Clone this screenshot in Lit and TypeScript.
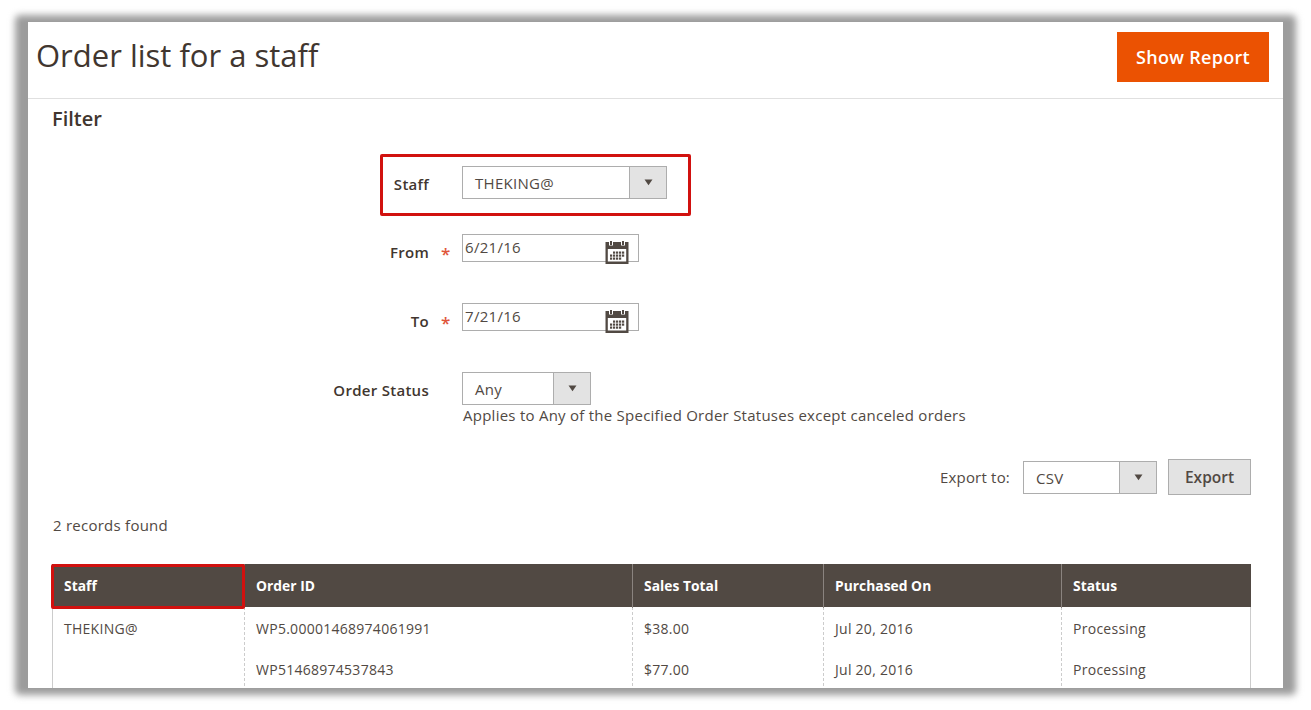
import { LitElement, html, svg, css } from "lit";
import { customElement, property } from "lit/decorators.js";

@customElement("drop-select")
class DropSelect extends LitElement {
  @property() value = "";
  static styles = css`
    :host { display: flex; box-sizing: border-box; height: 33px; border: 1px solid #adadad; background: #fff; }
    .value { flex: 1; padding-left: 12px; line-height: 32px; font-size: 15px; letter-spacing: 0.3px; color: #514943; }
    .arrow { width: 37px; box-sizing: border-box; border-left: 1px solid #adadad; background: #e3e3e3; display: flex; justify-content: center; padding-top: 12px; }
    svg { display: block; width: 9px; height: 7px; }
  `;
  render() {
    return html`<div class="value">${this.value}</div>
      <div class="arrow"><svg viewBox="0 0 9 7"><path d="M0.5 0.5h8L4.5 6.3z" fill="#514943" /></svg></div>`;
  }
}

@customElement("date-field")
class DateField extends LitElement {
  @property() value = "";
  static styles = css`
    :host { display: flex; justify-content: space-between; box-sizing: border-box; width: 177px; height: 28px; border: 1px solid #adadad; padding: 0 9px 0 2px; }
    .value { line-height: 25px; font-size: 15px; letter-spacing: 0.3px; color: #514943; }
    svg { display: block; width: 24px; height: 24px; margin-top: 5px; }
  `;
  render() {
    const dots = [
      [3, 0], [6, 0], [9, 0], [12, 0],
      [0, 3], [3, 3], [6, 3], [9, 3], [12, 3],
      [0, 6], [3, 6], [6, 6], [9, 6],
    ];
    return html`<div class="value">${this.value}</div>
      <svg viewBox="0 0 24 24">
        <path d="M0.5 2H23.5V24H0.5z" fill="#514943" />
        <path d="M2.8 9H21.2V21.5H2.8z" fill="#fff" />
        <path d="M4 0.5H8V5.5H4zM16 0.5H20V5.5H16z" fill="#fff" />
        <path d="M5 1H7V5H5zM17 1H19V5H17z" fill="#514943" />
        ${dots.map(([x, y]) => svg`<rect x=${5 + x} y=${11.5 + y} width="2.2" height="2.2" fill="#514943" />`)}
      </svg>`;
  }
}

@customElement("app-root")
class AppRoot extends LitElement {
  static styles = css`
    :host { display: block; box-sizing: border-box; height: 710px; overflow: hidden; background: #fff; padding: 22px 28px; font-family: "Open Sans", "Noto Sans", sans-serif; color: #514943; }
    * { box-sizing: border-box; }
    .frame { position: relative; z-index: 0; height: 666px; width: 1255px; }
    .shade { position: absolute; z-index: -1; inset: -7px -13px; border-radius: 5px; background: #9c9c9c; filter: blur(3.5px); }
    .page { height: 666px; overflow: hidden; background: #fff; }
    .top { height: 77px; border-bottom: 1px solid #e0e0e0; display: flex; justify-content: space-between; padding: 10px 14px 0 8px; color: #41362f; }
    h1 { margin: 0; font-weight: 400; font-size: 31px; line-height: 47px; white-space: nowrap; }
    .primary { height: 50px; width: 152px; background: #eb5202; color: #fff; font-weight: 600; font-size: 18px; letter-spacing: 0.3px; line-height: 50px; text-align: center; }
    .content { padding: 0 32px 0 24px; }
    h2 { margin: 0; font-weight: 600; font-size: 20px; line-height: 40px; height: 67px; color: #41362f; }
    .fields { display: grid; grid-template-columns: 378px auto; grid-template-rows: 68px 69px 69px 87px; column-gap: 32px; align-items: start; }
    .label { text-align: right; font-weight: 600; font-size: 15px; letter-spacing: 0.28px; line-height: 20px; padding: 8px 1px 0 0; color: #41362f; }
    .mark { position: relative; }
    .mark::after { content: "*"; position: absolute; left: 100%; top: 2px; margin-left: 12px; color: #e0553a; font-size: 17px; letter-spacing: 0; }
    .staff { position: relative; width: 205px; }
    .ring { position: absolute; left: -82px; top: -12px; width: 311px; height: 62px; border: 3px solid #d1110f; border-radius: 2px; }
    .wide { width: 205px; }
    .status { width: 129px; }
    .note { font-size: 15px; letter-spacing: 0.25px; line-height: 20px; padding-left: 1px; white-space: nowrap; }
    .export { display: flex; justify-content: flex-end; align-items: center; height: 36px; }
    .csv { width: 134px; margin: 0 11px 0 13px; }
    .exportLabel { font-size: 15px; letter-spacing: 0.2px; }
    .secondary { width: 83px; height: 36px; border: 1px solid #adadad; background: #e3e3e3; color: #514943; font-weight: 600; font-size: 15.5px; line-height: 34px; text-align: center; }
    .count { font-size: 15px; letter-spacing: 0.25px; line-height: 20px; padding: 20px 0 29px 1px; }
    .table { border-right: 1px solid #ccc; border-left: 1px solid #ccc; }
    .row { display: grid; grid-template-columns: 191px 388px 191px 238px 1fr; height: 41px; }
    .cell { padding-left: 11px; font-size: 14px; letter-spacing: 0.27px; line-height: 43px; border-left: 1px dashed #ccc; white-space: nowrap; }
    .cell:first-child { border-left: 0; }
    .head { height: 43px; margin: 0 -1px; padding-left: 1px; background: #514943; color: #fff; position: relative; }
    .head .cell { border-left: 1px solid #8a837f; font-weight: 700; line-height: 44px; font-size: 13.8px; letter-spacing: 0.03px; }
    .head .cell:first-child { border-left: 0; }
    .mask { position: absolute; left: -1px; top: 0; width: 194px; height: 45px; border: 3px solid #d1110f; border-radius: 2px; }
  `;
  rows = [
    ["THEKING@", "WP5.00001468974061991", "$38.00", "Jul 20, 2016", "Processing"],
    ["", "WP51468974537843", "$77.00", "Jul 20, 2016", "Processing"],
  ];
  render() {
    return html`<div class="frame">
      <div class="shade"></div>
      <div class="page">
        <div class="top"><h1>Order list for a staff</h1><div class="primary">Show Report</div></div>
        <div class="content">
          <h2>Filter</h2>
          <div class="fields">
            <div class="label">Staff</div>
            <div class="staff"><drop-select class="wide" value="THEKING@"></drop-select><div class="ring"></div></div>
            <div class="label"><span class="mark">From</span></div>
            <date-field value="6/21/16"></date-field>
            <div class="label"><span class="mark">To</span></div>
            <date-field value="7/21/16"></date-field>
            <div class="label">Order Status</div>
            <div>
              <drop-select class="status" value="Any"></drop-select>
              <div class="note">Applies to Any of the Specified Order Statuses except canceled orders</div>
            </div>
          </div>
          <div class="export">
            <span class="exportLabel">Export to:</span>
            <drop-select class="csv" value="CSV"></drop-select>
            <div class="secondary">Export</div>
          </div>
          <div class="count">2 records found</div>
          <div class="table">
            <div class="row head">
              ${["Staff", "Order ID", "Sales Total", "Purchased On", "Status"].map((t) => html`<div class="cell">${t}</div>`)}
              <div class="mask"></div>
            </div>
            ${this.rows.map((r) => html`<div class="row">${r.map((t) => html`<div class="cell">${t}</div>`)}</div>`)}
          </div>
        </div>
      </div>
    </div>`;
  }
}
